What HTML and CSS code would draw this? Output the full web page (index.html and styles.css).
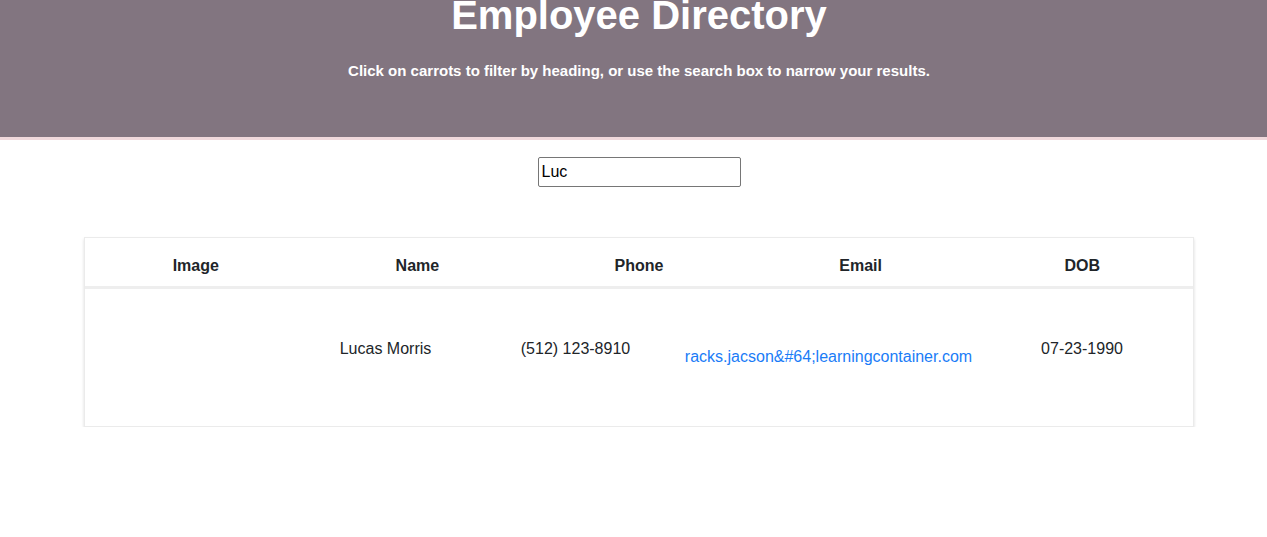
FILE: index.html
```html
<!DOCTYPE html>
<html lang="en">
<head>
<meta charset="utf-8">
<title>Employee Directory</title>
<link rel="stylesheet" href="styles.css">
</head>
<body>
<header class="hero">
  <div class="wrap">
    <h1 class="hero-title">Employee Directory</h1>
    <p class="hero-sub">Click on carrots to filter by heading, or use the search box to narrow your results.</p>
  </div>
</header>
<main class="wrap">
  <div class="search-row">
    <input class="search" type="text" value="Luc">
  </div>
  <section class="card">
    <div class="head-row">
      <div class="th">Image</div>
      <div class="th">Name</div>
      <div class="th">Phone</div>
      <div class="th">Email</div>
      <div class="th">DOB</div>
    </div>
    <div class="body-row">
      <div class="td"></div>
      <div class="td">Lucas Morris</div>
      <div class="td">(512) 123-8910</div>
      <div class="td td-email"><a href="#">racks.jacson&amp;#64;learningcontainer.com</a></div>
      <div class="td">07-23-1990</div>
    </div>
  </section>
</main>
</body>
</html>
```

FILE: styles.css
```css
* { box-sizing: border-box; }
html, body { margin: 0; padding: 0; }
body {
  font-family: "Liberation Sans", Arial, sans-serif;
  font-size: 16px;
  line-height: 24px;
  color: #212529;
  background: #fff;
}
.wrap {
  width: 1110px;
  margin-left: 84px;
}
.hero {
  background: #827580;
  height: 140px;
  border-bottom: 3px solid #f0d9dc;
  overflow: hidden;
  color: #fff;
  text-align: center;
}
.hero-title {
  font-size: 40px;
  line-height: 48px;
  font-weight: 700;
  margin: -9px 0 0;
}
.hero-sub {
  font-size: 15px;
  line-height: 18px;
  font-weight: 700;
  margin: 23px 0 0;
}
.search-row {
  display: flex;
  justify-content: center;
  padding-top: 17px;
}
.search {
  width: 203px;
  height: 30px;
  border: 1px solid #767676;
  border-radius: 2px;
  padding: 1px 3px;
  font-family: "Liberation Sans", Arial, sans-serif;
  font-size: 16px;
  color: #000;
  background: #fff;
  margin: 0;
}
.card {
  margin-top: 50px;
  border: 1px solid #ebebeb;
  box-shadow: 0 2px 3px rgba(0,0,0,0.14);
  background: #fff;
}
.head-row {
  display: grid;
  grid-template-columns: repeat(5, 1fr);
  height: 51px;
  border-bottom: 3px solid #eeeeee;
  padding-top: 16px;
}
.th {
  text-align: center;
  font-weight: 700;
}
.body-row {
  display: grid;
  grid-template-columns: 221px 159px 221px 285px 1fr;
  height: 137px;
  padding-top: 48px;
  align-items: start;
}
.td {
  text-align: center;
  white-space: nowrap;
}
.td-email {
  margin-top: 8px;
  display: flex;
  justify-content: center;
}
.td-email a {
  color: #1a7cf7;
  text-decoration: none;
}
```
